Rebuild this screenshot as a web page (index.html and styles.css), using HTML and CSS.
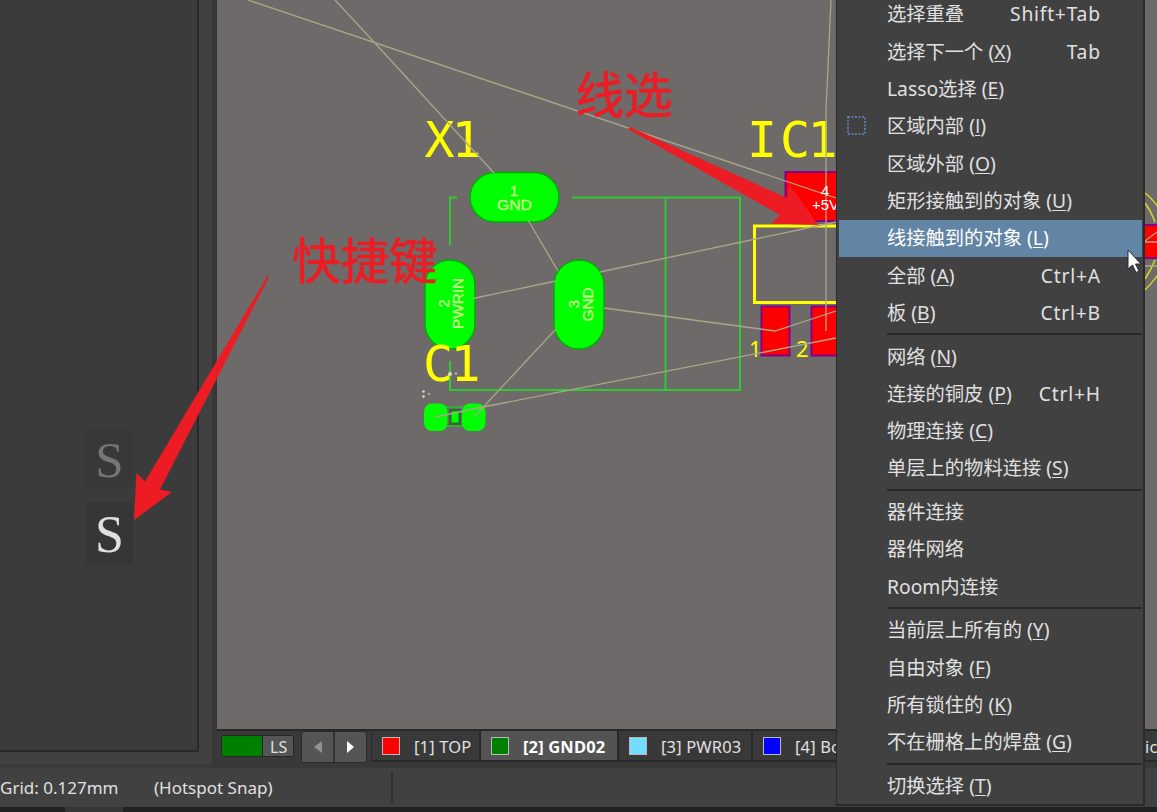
FILE: index.html
```
<!DOCTYPE html>
<html lang="zh-CN">
<head>
<meta charset="utf-8">
<title>PCB Editor</title>
<link rel="stylesheet" href="styles.css">
</head>
<body>
<div class="app">
  <div class="workspace">
    <aside class="panel"><div class="panel-body"></div></aside>
    <main class="editor">
      <svg class="board" viewBox="217 0 940 729">
        <g class="silk-green">
          <path d="M457 197.500H450V245M450 361V390H740V197.500H572M665.500 197.500V390"/>
        </g>
        <g class="pads-red">
          <rect x="785.500" y="172" width="70" height="49"/>
          <rect x="761.500" y="306.500" width="28" height="49"/>
          <rect x="811.500" y="306.500" width="40" height="49"/>
          <rect x="1130" y="225" width="40" height="33"/>
        </g>
        <rect class="outline" x="754.500" y="226" width="110" height="76.500"/>
        <path class="arcs" d="M1145 193Q1153 199 1160 210M1145 203Q1151 211 1155 222M1145 279Q1151 270 1155 260M1145 290Q1153 282 1160 272"/>
        <g class="pads-green">
          <rect x="470" y="172.500" width="89" height="49.500" rx="24.750"/>
          <rect x="425" y="260" width="50" height="89" rx="25"/>
          <rect x="554" y="260" width="50" height="89" rx="25"/>
        </g>
        <g class="silk-text">
          <text x="424.500 451.500" y="156.500">X1</text>
          <text x="423 450.500" y="381">C1</text>
          <text x="747 780 807.500" y="156.500">IC1</text>
        </g>
        <g class="pin-text"><text x="749" y="357">1</text><text x="796" y="357">2</text></g>
        <g class="capacitor">
          <path class="cap-line" d="M445 407H465M445 426H465"/>
          <rect x="424" y="403.500" width="23.500" height="27.500" rx="8"/>
          <rect x="462" y="403.500" width="23.500" height="27.500" rx="8"/>
          <rect class="cap-core" x="449" y="409" width="12" height="16"/>
          <rect x="451.500" y="411.500" width="7" height="11"/>
        </g>
        <g class="nets">
          <path d="M248 0L836 198M335 0L374 42L494 173M831 0L826 110V331M528 220L558 271M473 298.500L556 281M600 272L836 222M604 308L775 331L836 311M556 329L474 417M435 417L483 407L836 338"/>
          <path d="M1145 241L1157 232M1145 242H1157M1145 266H1157"/>
        </g>
        <g class="pad-text">
          <text x="514" y="195.500">1</text>
          <text x="514.500" y="210" textLength="35" lengthAdjust="spacingAndGlyphs">GND</text>
          <text transform="translate(449 303.500) rotate(-90)">2</text>
          <text transform="translate(463 303.500) rotate(-90)" textLength="51" lengthAdjust="spacingAndGlyphs">PWRIN</text>
          <text transform="translate(578.500 304) rotate(-90)">3</text>
          <text transform="translate(593 304.500) rotate(-90)" textLength="34" lengthAdjust="spacingAndGlyphs">GND</text>
        </g>
        <g class="power-text"><text x="821" y="196">4</text><text x="812" y="210">+5V</text></g>
        <g class="dots"><circle cx="423.500" cy="391.500" r="1.300"/><circle cx="423.500" cy="396.500" r="1.300"/><circle cx="429" cy="394" r=".9"/><circle cx="450" cy="374" r="2"/><circle cx="456" cy="373.500" r="1"/></g>
      </svg>
      <nav class="layers">
        <div class="layer-set"><i class="set-color"></i><span>LS</span></div>
        <div class="pager">
          <span><svg width="8" height="12" viewBox="0 0 8 12"><path class="arrow-dim" d="M8 0V12L0 6Z"/></svg></span>
          <span><svg width="7" height="12" viewBox="0 0 7 12"><path class="arrow-lit" d="M0 0V12L7 6Z"/></svg></span>
        </div>
        <div class="tab top"><i class="swatch red"></i><span>[1] TOP</span></div>
        <div class="tab gnd active"><i class="swatch green"></i><span>[2] GND02</span></div>
        <div class="tab pwr"><i class="swatch cyan"></i><span>[3] PWR03</span></div>
        <div class="tab bottom"><i class="swatch blue"></i><span>[4] Bot</span></div>
        <div class="tab mech"><span>ical 1</span></div>
      </nav>
    </main>
  </div>
  <footer class="status"><span class="grid">Grid: 0.127mm</span><span class="snap">(Hotspot Snap)</span></footer>
  <div class="taskbar"><i></i></div>

  <div class="key faded">S</div>
  <div class="key">S</div>

  <svg class="notes" viewBox="0 0 1157 812">
    <path d="M267.500 276L269 277L160 489.500L172 492L134 520L136.500 473L145 481.500Z"/>
    <path d="M628 129L630 127L787 198L789 184L818.500 225L771 223.500L780 215Z"/>
    <text x="575.500" y="113">线选</text>
    <text x="292" y="279">快捷键</text>
  </svg>

  <div class="menu">
    <div class="item"><span>选择重叠</span><kbd>Shift+Tab</kbd></div>
    <div class="item"><span>选择下一个 (<u>X</u>)</span><kbd>Tab</kbd></div>
    <div class="item"><span>Lasso选择 (<u>E</u>)</span></div>
    <div class="item"><svg class="marquee" width="19" height="19"><rect x="1" y="1" width="17" height="17"/></svg><span>区域内部 (<u class="plain-i">I</u>)</span></div>
    <div class="item"><span>区域外部 (<u>O</u>)</span></div>
    <div class="item"><span>矩形接触到的对象 (<u>U</u>)</span></div>
    <div class="item selected"><span>线接触到的对象 (<u>L</u>)</span></div>
    <div class="item"><span>全部 (<u>A</u>)</span><kbd>Ctrl+A</kbd></div>
    <div class="item"><span>板 (<u>B</u>)</span><kbd>Ctrl+B</kbd></div>
    <hr>
    <div class="item"><span>网络 (<u>N</u>)</span></div>
    <div class="item"><span>连接的铜皮 (<u>P</u>)</span><kbd>Ctrl+H</kbd></div>
    <div class="item"><span>物理连接 (<u>C</u>)</span></div>
    <div class="item"><span>单层上的物料连接 (<u>S</u>)</span></div>
    <hr>
    <div class="item"><span>器件连接</span></div>
    <div class="item"><span>器件网络</span></div>
    <div class="item"><span>Room内连接</span></div>
    <hr>
    <div class="item"><span>当前层上所有的 (<u>Y</u>)</span></div>
    <div class="item"><span>自由对象 (<u>F</u>)</span></div>
    <div class="item"><span>所有锁住的 (<u>K</u>)</span></div>
    <div class="item"><span>不在栅格上的焊盘 (<u>G</u>)</span></div>
    <hr>
    <div class="item"><span>切换选择 (<u>T</u>)</span></div>
  </div>
  <svg class="cursor" width="18" height="27" viewBox="0 0 18 27"><path d="M2 2V21L6.500 17L10 24.500L13 23L9.500 16H15Z"/></svg>
</div>
</body>
</html>
```
FILE: styles.css
```
* { box-sizing: border-box; }
body { margin: 0; background: #414141; font-family: "Noto Sans", "Noto Sans CJK SC", sans-serif; color: #e0e0e0; }
.app { position: relative; width: 1157px; height: 812px; overflow: hidden; display: flex; flex-direction: column; }
.workspace { display: flex; height: 768px; }
.panel { width: 217px; padding-right: 13px; background: #414141; border-right: 5px solid #373737; border-bottom: 4px solid #393939; }
.panel-body { height: 752px; background: #3b3b3b; border-right: 2px solid #292929; border-bottom: 2px solid #292929; }
.editor { width: 940px; display: flex; flex-direction: column; background: #393939; }
.board { display: block; width: 940px; height: 729px; background: #6d6a69; }
.layers { height: 35px; display: flex; align-items: flex-start; border-top: 2px solid #282828; font-size: 16.500px; white-space: nowrap; overflow: hidden; }
.layers > * { flex: none; }
.layer-set { width: 73px; height: 22px; margin: 4px 7px 0 4px; display: flex; border: 1px solid #272727; border-radius: 3px; overflow: hidden; }
.set-color { width: 41px; background: #008000; border-right: 1px solid #222; }
.layer-set span { flex: 1; padding-left: 7px; background: #555; line-height: 22px; font-size: 16px; }
.pager { width: 66px; height: 32px; margin-right: 4px; display: flex; background: #555; border: 1px solid #2a2a2a; border-radius: 3px; }
.pager span { flex: 1; display: grid; place-items: center; }
.pager span + span { border-left: 2px solid #333; }
.pager svg { display: block; }
.arrow-dim { fill: #929292; }
.arrow-lit { fill: #fff; }
.tab { height: 31px; display: flex; align-items: center; gap: 14px; padding-left: 10px; background: #393939; border-right: 2px solid #292929; border-bottom: 2px solid #292929; }
.tab span { display: block; padding-top: 2px; letter-spacing: .15px; }
.top { width: 110px; border-left: 1px solid #292929; }
.gnd { width: 138px; }
.pwr { width: 134px; }
.bottom { width: 386px; }
.mech { width: 200px; padding-left: 6px; }
.active { background: #535353; color: #fff; font-weight: 700; }
.swatch { width: 18px; height: 18px; flex: none; border: 1px solid #b9b9b9; }
.red { background: #f00; }
.green { background: #008000; }
.cyan { background: #73dcff; }
.blue { background: #00f; }
.status { height: 39px; display: flex; align-items: center; background: #414141; font-size: 17px; white-space: nowrap; }
.grid { width: 154px; }
.snap { width: 239px; line-height: 31px; border-right: 2px solid #303030; }
.taskbar { height: 5px; background: #222; }
.taskbar i { display: block; width: 58px; height: 5px; margin-left: 65px; background: #363636; }

.silk-green { fill: none; stroke: #32c832; stroke-width: 2; }
.pads-red { fill: #f00; stroke: #870087; stroke-width: 2; }
.outline { fill: none; stroke: #ff0; stroke-width: 3; }
.arcs { fill: none; stroke: #d8d820; stroke-width: 1.500; }
.silk-text { fill: #ff0; font: 50px "DejaVu Sans Mono", monospace; }
.pin-text { fill: #ff0; font: 22px "Noto Sans", sans-serif; }
.pads-green { fill: #0f0; stroke: #08a808; stroke-width: 1.500; }
.capacitor { fill: #0f0; }
.cap-line { stroke: #2cbc2c; stroke-width: 1.500; }
.capacitor .cap-core { fill: #277027; }
.nets { fill: none; stroke: #aaa788; stroke-width: 1.300; }
.pad-text { fill: #c6f68a; stroke: #c6f68a; stroke-width: .4; font: 14.500px "Liberation Sans", sans-serif; text-anchor: middle; }
.power-text { fill: #fff; font: 15px "Liberation Sans", sans-serif; }
.dots { fill: #ded9b8; }

.key { position: absolute; left: 86px; top: 502px; width: 47px; height: 63px; background: #363636; color: #e0e0e0; font: 52px/65px "Liberation Serif", serif; text-align: center; }
.key.faded { top: 430px; height: 58px; background: #383838; color: #757575; font-size: 51px; line-height: 61px; }
.notes { position: absolute; left: 0; top: 0; width: 1157px; height: 812px; fill: #ed1c24; font: 48.500px "Noto Sans CJK SC", sans-serif; pointer-events: none; }
.notes text { stroke: #ed1c24; stroke-width: .7; }

.menu { position: absolute; left: 836px; top: 0; width: 309px; height: 806px; padding: 0 1px 0 2px; background: #414141; border: solid #2b2b2b; border-width: 0 2px 2px 1px; overflow: hidden; }
.menu .item:first-child { margin-top: -3.700px; }
.item { position: relative; height: 37.300px; padding: 0 42px 2px 48px; display: flex; align-items: center; justify-content: space-between; font-size: 19.300px; line-height: 35px; white-space: nowrap; }
.item span { display: block; }
.item u { text-decoration-thickness: 1px; text-underline-offset: 2px; }
.plain-i { font-family: "Open Sans", "Noto Sans", sans-serif; }
.item kbd { font-family: inherit; letter-spacing: .75px; margin-right: -.75px; }
.selected { background: #6284a5; color: #fff; }
.menu hr { height: 2px; margin: 1.500px 0 2.900px 48px; border: 0; background: #292929; }
.marquee { position: absolute; left: 8px; top: 8px; fill: none; stroke: #6488c8; stroke-width: 1.500; stroke-dasharray: 2 1.500; }
.cursor { position: absolute; left: 1126px; top: 248px; fill: #fff; stroke: #222a38; stroke-width: 1; }
```
